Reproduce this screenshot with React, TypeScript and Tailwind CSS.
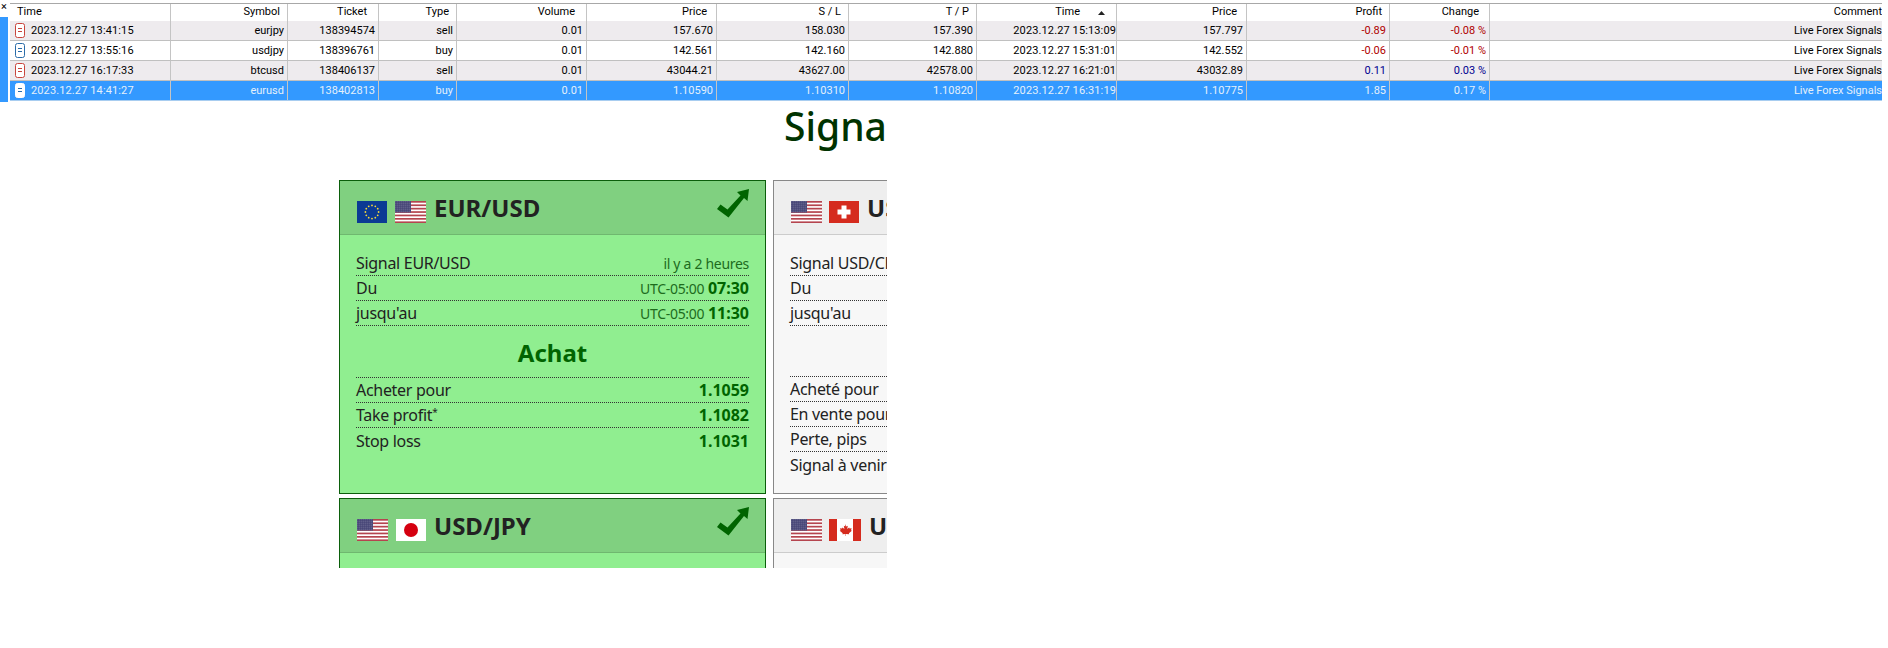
import React from 'react';

const tableCols = 'grid grid-cols-[161px_117px_91px_78px_130px_130px_132px_128px_140px_130px_143px_100px_392px]';

const headers = [
  { label: 'Time', cls: 'border-r justify-start pl-[7px]' },
  { label: 'Symbol', cls: 'border-r justify-end pr-[7px]' },
  { label: 'Ticket', cls: 'border-r justify-end pr-[11px]' },
  { label: 'Type', cls: 'border-r justify-end pr-[7px]' },
  { label: 'Volume', cls: 'border-r justify-end pr-[11px]' },
  { label: 'Price', cls: 'border-r justify-end pr-[9px]' },
  { label: 'S / L', cls: 'border-r justify-end pr-[7px]' },
  { label: 'T / P', cls: 'border-r justify-end pr-[7px]' },
  { label: 'Time', cls: 'border-r justify-end pr-[11px]' },
  { label: 'Price', cls: 'border-r justify-end pr-[9px]' },
  { label: 'Profit', cls: 'border-r justify-end pr-[7px]' },
  { label: 'Change', cls: 'border-r justify-end pr-[10px]' },
  { label: 'Comment', cls: 'justify-end' },
];

const orders = [
  { open: '2023.12.27 13:41:15', symbol: 'eurjpy', ticket: '138394574', type: 'sell', volume: '0.01', price: '157.670', sl: '158.030', tp: '157.390', close: '2023.12.27 15:13:09', closePrice: '157.797', profit: '-0.89', change: '-0.08 %' },
  { open: '2023.12.27 13:55:16', symbol: 'usdjpy', ticket: '138396761', type: 'buy', volume: '0.01', price: '142.561', sl: '142.160', tp: '142.880', close: '2023.12.27 15:31:01', closePrice: '142.552', profit: '-0.06', change: '-0.01 %' },
  { open: '2023.12.27 16:17:33', symbol: 'btcusd', ticket: '138406137', type: 'sell', volume: '0.01', price: '43044.21', sl: '43627.00', tp: '42578.00', close: '2023.12.27 16:21:01', closePrice: '43032.89', profit: '0.11', change: '0.03 %' },
  { open: '2023.12.27 14:41:27', symbol: 'eurusd', ticket: '138402813', type: 'buy', volume: '0.01', price: '1.10590', sl: '1.10310', tp: '1.10820', close: '2023.12.27 16:31:19', closePrice: '1.10775', profit: '1.85', change: '0.17 %' },
];

const OrderIcon = ({ type, selected }: { type: string; selected: boolean }) => {
  const stroke = selected ? '#ffffff' : type === 'sell' ? '#c8443c' : '#2a6ca8';
  return (
    <svg width="10" height="15" viewBox="0 0 10 15" className="shrink-0">
      <rect x="0.5" y="0.5" width="9" height="14" rx="2" fill="#ffffff" stroke={stroke} />
      <path d="M3 5.5h4M3 8.5h4" stroke={selected ? '#2a6ca8' : stroke} strokeWidth="1" />
    </svg>
  );
};

const Cell = ({ children, className = 'border-r pr-[3px]' }: { children: React.ReactNode; className?: string }) => (
  <div className={`flex items-center justify-end overflow-hidden whitespace-nowrap border-[#c4c4c4] pt-[1px] ${className}`}>
    {children}
  </div>
);

const OrdersTable = () => (
  <div className="flex h-[102px] w-full">
    <div className="flex w-[10px] shrink-0 flex-col">
      <div className="h-[17px] w-[8px] text-center text-[11px] leading-[14px] text-black">×</div>
      <div className="mr-[2px] h-[85px] bg-[#3399ff]" />
    </div>
    <div className="w-[1872px] shrink-0 overflow-hidden pt-[3px]">
      <div className={`${tableCols} h-[18px] border-t border-[#a8a8a8]`}>
        {headers.map((h, i) => (
          <div
            key={i}
            className={`flex items-center overflow-hidden whitespace-nowrap border-[#c4c4c4] text-black ${h.cls}`}
          >
            {h.label}
            {i === 8 && (
              <svg width="7" height="4" viewBox="0 0 7 4" className="ml-[18px] shrink-0">
                <path d="M3.5 0L7 4H0z" fill="#222222" />
              </svg>
            )}
          </div>
        ))}
      </div>
      {orders.map((o, i) => {
        const selected = i === 3;
        const rowColor = selected
          ? 'border-[#a8cdf0] bg-[#3399ff] text-[#e4f0fb]'
          : i % 2 === 0
            ? 'border-[#c0c0c0] bg-[#eeebee] text-black'
            : 'border-[#c0c0c0] bg-white text-black';
        const plColor = selected ? '' : o.profit.startsWith('-') ? 'text-[#b00000]' : 'text-[#000090]';
        return (
          <div key={o.ticket} className={`${tableCols} h-[20px] border-b ${rowColor}`}>
            <div className="flex items-center gap-[6px] whitespace-nowrap border-r border-[#c4c4c4] pl-[5px]">
              <OrderIcon type={o.type} selected={selected} />
              <span className="pt-[1px] tracking-[0.12px]">{o.open}</span>
            </div>
            <Cell>{o.symbol}</Cell>
            <Cell>{o.ticket}</Cell>
            <Cell>{o.type}</Cell>
            <Cell>{o.volume}</Cell>
            <Cell>{o.price}</Cell>
            <Cell>{o.sl}</Cell>
            <Cell>{o.tp}</Cell>
            <Cell className="border-r tracking-[0.12px]">{o.close}</Cell>
            <Cell>{o.closePrice}</Cell>
            <Cell className={`border-r pr-[3px] ${plColor}`}>{o.profit}</Cell>
            <Cell className={`border-r pr-[3px] ${plColor}`}>{o.change}</Cell>
            <Cell className="">Live Forex Signals</Cell>
          </div>
        );
      })}
    </div>
  </div>
);

const UsFlag = () => (
  <svg width="31" height="22" viewBox="0 0 31 22" className="shrink-0">
    <rect width="31" height="22" fill="#ffffff" />
    {[0, 3.4, 6.8, 10.2, 13.6, 17, 20.4].map((y) => (
      <rect key={y} y={y} width="31" height="1.7" fill="#b5454f" />
    ))}
    <rect width="16" height="11.5" fill="#3c3b6e" />
    <rect width="16" height="11.5" fill="url(#usStars)" />
    <defs>
      <pattern id="usStars" width="2" height="2" patternUnits="userSpaceOnUse">
        <rect x="0.5" y="0.5" width="0.8" height="0.8" fill="#c6c8dc" />
      </pattern>
    </defs>
  </svg>
);

const EuFlag = () => {
  const stars = Array.from({ length: 12 }, (_, i) => {
    const a = (i * Math.PI) / 6;
    return { x: 15 + 6.6 * Math.cos(a), y: 11 + 6.6 * Math.sin(a) };
  });
  return (
    <svg width="30" height="22" viewBox="0 0 30 22" className="shrink-0">
      <rect width="30" height="22" fill="#0b3a94" />
      {stars.map((s, i) => (
        <circle key={i} cx={s.x} cy={s.y} r="0.9" fill="#f4d83a" />
      ))}
    </svg>
  );
};

const JpFlag = () => (
  <svg width="30" height="22" viewBox="0 0 30 22" className="shrink-0">
    <rect width="30" height="22" fill="#ffffff" />
    <circle cx="15" cy="11" r="7" fill="#d50010" />
  </svg>
);

const ChFlag = () => (
  <svg width="30" height="22" viewBox="0 0 30 22" className="shrink-0">
    <rect width="30" height="22" fill="#d52b1e" />
    <path d="M12.5 4.5h5v4h4v5h-4v4h-5v-4h-4v-5h4z" fill="#ffffff" />
  </svg>
);

const CaFlag = () => (
  <svg width="32" height="22" viewBox="0 0 32 22" className="shrink-0">
    <rect width="32" height="22" fill="#ffffff" />
    <rect width="8" height="22" fill="#d52b1e" />
    <rect x="24" width="8" height="22" fill="#d52b1e" />
    <path d="M16 5l1.3 2.4 1.5-.7-.6 3.3 1.9-1.6.5 1.2 2-.3-.6 2 .9.5-3 2.4.3 1.1-3.2-.4V17h-.4v-2.1l-3.2.4.3-1.1-3-2.4.9-.5-.6-2 2 .3.5-1.2 1.9 1.6-.6-3.3 1.5.7z" fill="#d52b1e" />
  </svg>
);

const BuyArrow = () => (
  <svg width="32" height="29" viewBox="0 0 32 29" className="shrink-0">
    <path d="M0 20L3.5 15.5L10.5 20.5L23.5 6.5L20 3L32 0L30.5 12L27 9L11.5 28.5Z" fill="#006400" />
  </svg>
);

const Row = ({ label, right, border = true }: { label: React.ReactNode; right?: React.ReactNode; border?: boolean }) => (
  <div className={`flex h-[25px] items-center justify-between whitespace-nowrap text-[16px] ${border ? 'border-b border-dotted border-[#333]' : ''}`}>
    <span className="tracking-[-0.3px]">{label}</span>
    {right}
  </div>
);

const Utc = ({ time }: { time: string }) => (
  <span className="text-[14px] text-[#1d6b1d]">
    <span className="tracking-[-0.3px]">UTC-05:00</span> <b className="text-[16px] text-[#006400]">{time}</b>
  </span>
);

const Price = ({ value }: { value: string }) => <b className="text-[#006400]">{value}</b>;

const GreenCard = ({ flags, pair, full }: { flags: React.ReactNode; pair: string; full?: boolean }) => (
  <div className="border border-[#0b5e0b] bg-[#90ee90] text-[#222]">
    <div className="flex h-[54px] items-center justify-between border-b border-[#6fb86f] bg-[#80d080] pl-[17px] pr-[16px]">
      <div className="flex items-center gap-[8px]">
        <div className="mt-[8px] flex gap-[8px]">{flags}</div>
        <span className="text-[24px] font-bold">{pair}</span>
      </div>
      <div className="-mt-[8px]">
        <BuyArrow />
      </div>
    </div>
    <div className="min-h-[60px] px-[16px] pb-[40px] pt-[16px]">
      {full && (
        <>
          <Row label={`Signal ${pair}`} right={<span className="text-[14px] tracking-[-0.3px] text-[#1d6b1d]">il y a 2 heures</span>} />
          <Row label="Du" right={<Utc time="07:30" />} />
          <Row label="jusqu'au" right={<Utc time="11:30" />} />
          <div className="flex h-[52px] items-center justify-center border-b border-dotted border-[#333] pt-[3px] text-[24px] font-bold text-[#006400]">
            Achat
          </div>
          <Row label="Acheter pour" right={<Price value="1.1059" />} />
          <Row
            label={
              <>
                Take profit<sup className="text-[10px]">*</sup>
              </>
            }
            right={<Price value="1.1082" />}
          />
          <Row label="Stop loss" right={<Price value="1.1031" />} border={false} />
        </>
      )}
    </div>
  </div>
);

const GrayCard = ({ flags, pair, full }: { flags: React.ReactNode; pair: string; full?: boolean }) => (
  <div className="border border-[#888] bg-[#f7f7f7] text-[#222]">
    <div className="flex h-[54px] items-center border-b border-[#ccc] bg-[#eeeeee] pl-[17px]">
      <div className="flex items-center gap-[7px]">
        <div className="mt-[8px] flex gap-[7px]">{flags}</div>
        <span className="ml-[1px] text-[24px] font-bold">{pair}</span>
      </div>
    </div>
    <div className="min-h-[60px] px-[16px] pb-[15px] pt-[16px]">
      {full && (
        <>
          <Row label={`Signal ${pair}`} />
          <Row label="Du" />
          <Row label="jusqu'au" />
          <div className="h-[51px] border-b border-dotted border-[#333]" />
          <Row label="Acheté pour" />
          <Row label="En vente pour" />
          <Row label="Perte, pips" />
          <Row label="Signal à venir" border={false} />
        </>
      )}
    </div>
  </div>
);

const SignalsPanel = () => (
  <div className="h-[466px] w-[887px] overflow-hidden pl-[339px] font-['Noto_Sans',sans-serif]">
    <h1 className="whitespace-nowrap pl-[445px] text-[39px] font-medium leading-[48px] text-[#003300]">Signaux de trading</h1>
    <div className="mt-[30px] grid w-[861px] grid-cols-[427px_427px] gap-x-[7px] gap-y-[4px]">
      <GreenCard flags={<><EuFlag /><UsFlag /></>} pair="EUR/USD" full />
      <GrayCard flags={<><UsFlag /><ChFlag /></>} pair="USD/CHF" full />
      <GreenCard flags={<><UsFlag /><JpFlag /></>} pair="USD/JPY" />
      <GrayCard flags={<><UsFlag /><CaFlag /></>} pair="USD/CAD" />
    </div>
  </div>
);

export default function App() {
  return (
    <div className="h-[648px] w-[1888px] overflow-hidden bg-white font-['Roboto',sans-serif] text-[11px]">
      <OrdersTable />
      <SignalsPanel />
    </div>
  );
}
